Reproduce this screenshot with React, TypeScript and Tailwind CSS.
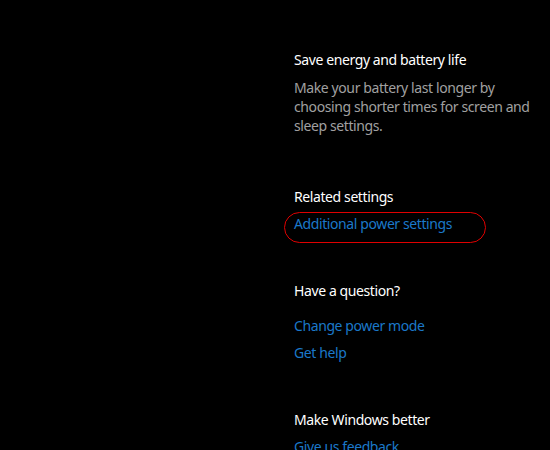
export default function App() {
    return (
        <div
            className="w-[550px] h-[450px] overflow-hidden bg-black flex"
            style={{ fontFamily: '"Noto Sans", "Open Sans", sans-serif' }}
        >
            <div className="w-[294px] shrink-0" />
            <div className="w-[240px] pt-[50px] text-[14px] tracking-[-0.4px]">
                {/* Save energy */}
                <h2 className="text-white leading-[20px]">Save energy and battery life</h2>
                <p className="mt-[8px] text-[#a0a0a0] leading-[19px]">
                    Make your battery last longer by choosing shorter times for screen and sleep settings.
                </p>

                {/* Related settings */}
                <h2 className="mt-[52px] text-white leading-[20px]">Related settings</h2>
                <div className="relative mt-[7px] leading-[20px]">
                    <a className="text-[#1b78c9]">Additional power settings</a>
                    <span className="absolute left-[-10px] top-[-2px] w-[202px] h-[31px] rounded-[16px] border border-[#e00000]" />
                </div>

                {/* Have a question */}
                <h2 className="mt-[47px] text-white leading-[20px]">Have a question?</h2>
                <div className="mt-[15px] flex flex-col gap-[7px] leading-[20px]">
                    <a className="text-[#1b78c9]">Change power mode</a>
                    <a className="text-[#1b78c9]">Get help</a>
                </div>

                {/* Make Windows better */}
                <h2 className="mt-[47px] text-white leading-[20px]">Make Windows better</h2>
                <a className="block mt-[7px] text-[#1b78c9] leading-[20px]">Give us feedback</a>
            </div>
        </div>
    );
}
